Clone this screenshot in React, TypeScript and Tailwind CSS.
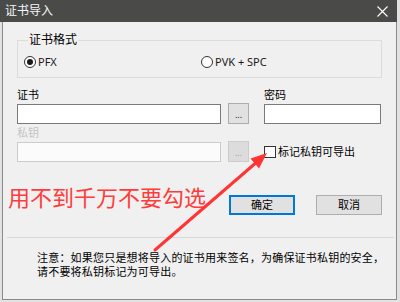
import React from 'react';

// =============================================================================
// Small Win32-style controls
// =============================================================================

function Radio({ checked, label }: { checked?: boolean; label: string }) {
  return (
    <label className="flex items-center gap-[2px]">
      <span className="flex h-[12px] w-[12px] items-center justify-center rounded-full border border-[#333333] bg-white">
        {checked && <span className="h-[6px] w-[6px] rounded-full bg-[#1a1a1a]" />}
      </span>
      <span className="text-[11px] leading-[14px] text-[#1a1a1a]">{label}</span>
    </label>
  );
}

function BrowseButton({ disabled }: { disabled?: boolean }) {
  return (
    <button
      type="button"
      disabled={disabled}
      className={`ml-[7px] flex h-[21px] w-[21px] items-end justify-center pb-[4px] border text-[9px] leading-[9px] ${
        disabled
          ? 'border-[#cccccc] bg-[#dcdcdc] text-[#a0a0a0]'
          : 'border-[#adadad] bg-[#e1e1e1] text-[#1a1a1a]'
      }`}
    >
      ...
    </button>
  );
}

function DialogButton({ label, focused }: { label: string; focused?: boolean }) {
  return (
    <button
      type="button"
      className={`flex h-[20px] w-[66px] items-center justify-center bg-[#e1e1e1] text-[11px] leading-[14px] text-black ${
        focused ? 'border-2 border-[#0078d7]' : 'border border-[#adadad]'
      }`}
    >
      {label}
    </button>
  );
}

// =============================================================================
// Annotation arrow (drawn over the dialog)
// =============================================================================

function AnnotationArrow() {
  return (
    <svg
      className="pointer-events-none absolute left-0 top-0"
      width="400"
      height="302"
      viewBox="0 0 400 302"
    >
      <line x1="155" y1="250" x2="258" y2="161" stroke="#ff3535" strokeWidth="3" strokeLinecap="round" />
      <polygon points="267,153 259,168.5 250.5,158.5" fill="#ff3535" />
    </svg>
  );
}

// =============================================================================
// Certificate import dialog
// =============================================================================

export default function App() {
  return (
    <div className="relative h-[302px] w-[400px] overflow-hidden bg-[#e2e2e2] font-['Noto_Sans','Noto_Sans_CJK_SC',sans-serif]">
      <div className="flex h-[300px] w-[397px] flex-col">
        {/* Title bar */}
        <div className="flex h-[22px] items-center justify-between bg-[#4a4a48] pl-[5px] pr-[9px]">
          <span className="text-[12px] leading-[14px] text-[#f4f6fa]">证书导入</span>
          <svg width="11" height="11" viewBox="0 0 11 11">
            <path d="M0.5 0.5 L10.5 10.5 M10.5 0.5 L0.5 10.5" stroke="#ffffff" strokeWidth="1.1" />
          </svg>
        </div>

        {/* Body */}
        <div className="ml-[2px] flex flex-1 flex-col border-b border-l border-r border-[#8a8a8a] bg-[#f0f0f0] pl-[14px] pr-[14px]">
          {/* Format group */}
          <fieldset className="mt-[10px] h-[46px] border border-[#dcdcdc] pl-[6px]">
            <legend className="ml-[4px] px-[1px] text-[12px] leading-[16px] text-black">证书格式</legend>
            <div className="mt-[7px] flex items-center">
              <div className="w-[177px]">
                <Radio checked label="PFX" />
              </div>
              <Radio label="PVK + SPC" />
            </div>
          </fieldset>

          {/* Certificate + password */}
          <div className="mt-[9px] flex">
            <div className="w-[232px]">
              <div className="text-[11px] leading-[16px] text-black">证书</div>
              <div className="flex items-center">
                <div className="h-[20px] w-[204px] border border-[#7a7a7a] bg-white" />
                <BrowseButton />
              </div>
            </div>
            <div className="ml-[15px] w-[117px]">
              <div className="text-[11px] leading-[16px] text-black">密码</div>
              <div className="flex h-[21px] items-center">
                <div className="h-[20px] w-[117px] border border-[#7a7a7a] bg-white" />
              </div>
            </div>
          </div>

          {/* Private key (disabled) + exportable checkbox */}
          <div className="mt-[1px] flex">
            <div className="w-[232px]">
              <div className="text-[11px] leading-[16px] text-[#c4c4c4]">私钥</div>
              <div className="flex items-center">
                <div className="h-[20px] w-[204px] border border-[#cccccc] bg-[#fbfbfb]" />
                <BrowseButton disabled />
              </div>
            </div>
            <div className="ml-[15px] flex items-end pb-[3px]">
              <label className="flex items-center gap-[2px]">
                <span className="h-[12px] w-[12px] border border-[#333333] bg-white" />
                <span className="text-[11px] leading-[14px] text-black">标记私钥可导出</span>
              </label>
            </div>
          </div>

          {/* Annotation + buttons */}
          <div className="flex items-start">
            <div className="-ml-[9px] mt-[22px] text-[22px] leading-[26px] text-[#ff3b3b]">用不到千万不要勾选</div>
            <div className="ml-auto mt-[33px] flex gap-[21px]">
              <DialogButton label="确定" focused />
              <DialogButton label="取消" />
            </div>
          </div>

          {/* Separator */}
          <div className="-ml-[10px] -mr-[12px] mt-[22px] h-px bg-[#d9d9d9]" />

          {/* Note */}
          <div className="ml-[20px] mt-[13px] whitespace-nowrap text-[11px] leading-[14px] tracking-[0.2px] text-black">
            <div>注意：如果您只是想将导入的证书用来签名，为确保证书私钥的安全，</div>
            <div>请不要将私钥标记为可导出。</div>
          </div>
        </div>
      </div>

      <AnnotationArrow />
    </div>
  );
}
